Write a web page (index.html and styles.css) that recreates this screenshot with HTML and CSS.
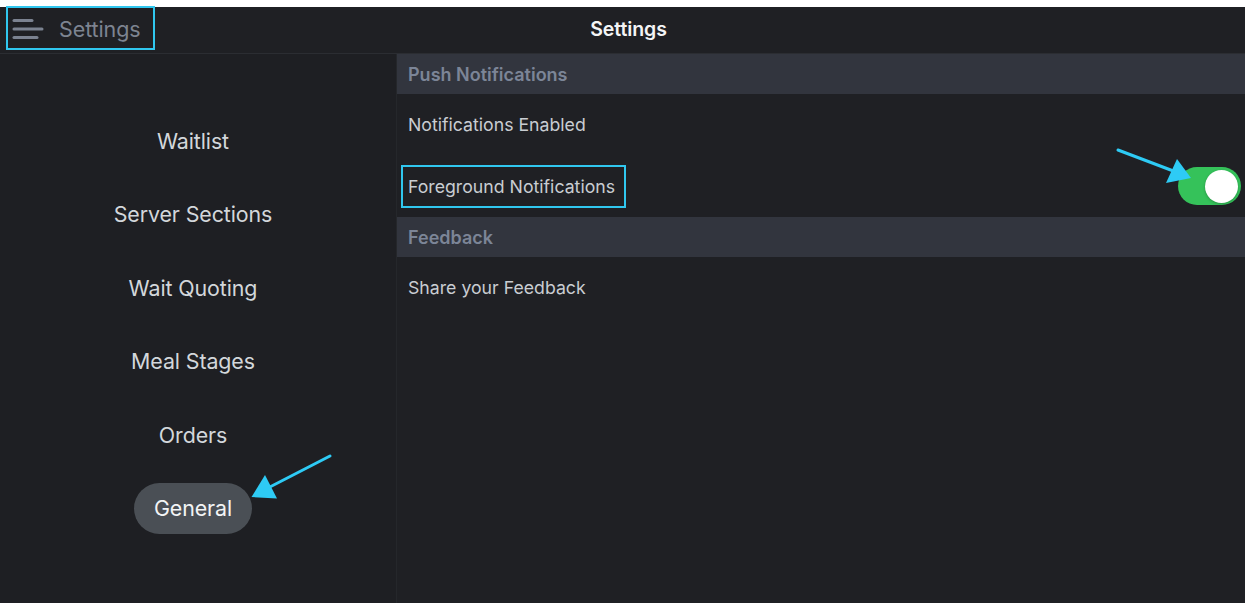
FILE: index.html
```html
<!DOCTYPE html>
<html>
<head>
<meta charset="utf-8">
<link rel="stylesheet" href="styles.css">
</head>
<body>
<div class="app">
  <header class="topbar">
    <div class="topbar-left">
      <button class="menu-btn">
        <svg class="hamburger" width="32" height="24" viewBox="0 0 32 24">
          <line x1="2" y1="3.5" x2="20" y2="3.5"/>
          <line x1="2" y1="12" x2="30" y2="12"/>
          <line x1="2" y1="20.5" x2="25" y2="20.5"/>
        </svg>
        <span class="menu-label">Settings</span>
      </button>
    </div>
    <div class="title">Settings</div>
    <div class="topbar-right"></div>
  </header>
  <div class="body">
    <nav class="sidebar">
      <div class="nav-item">Waitlist</div>
      <div class="nav-item">Server Sections</div>
      <div class="nav-item">Wait Quoting</div>
      <div class="nav-item">Meal Stages</div>
      <div class="nav-item">Orders</div>
      <div class="nav-item active">General</div>
    </nav>
    <main class="content">
      <div class="section-header">Push Notifications</div>
      <div class="row">Notifications Enabled</div>
      <div class="row">
        <span class="highlight">Foreground Notifications</span>
        <span class="toggle"><span class="knob"></span></span>
      </div>
      <div class="section-header">Feedback</div>
      <div class="row">Share your Feedback</div>
    </main>
  </div>
</div>
<svg class="annotations" width="1246" height="603" viewBox="0 0 1246 603">
  <line x1="330" y1="456" x2="264" y2="490"/>
  <polygon points="251.5,497 265,475 277,498.5"/>
  <line x1="1118" y1="150" x2="1176" y2="172"/>
  <polygon points="1191,178 1177,159 1166,183"/>
</svg>
</body>
</html>
```
FILE: styles.css
```css
* { box-sizing: border-box; }
html, body { margin: 0; padding: 0; }
body {
  background: #ffffff;
  width: 1246px;
  height: 603px;
  overflow: hidden;
  position: relative;
  font-family: Inter, "Noto Sans", "Liberation Sans", sans-serif;
}
.app {
  margin-top: 7px;
  width: 1245px;
  height: 596px;
  background: #1f2024;
  display: flex;
  flex-direction: column;
}
.topbar {
  height: 47px;
  flex: none;
  display: grid;
  grid-template-columns: 1fr auto 1fr;
  align-items: center;
  padding-left: 12px;
  border-bottom: 1px solid #2b2d32;
  background: #1f2024;
}
.topbar-left { display: flex; align-items: flex-start; height: 100%; margin-left: -12px; }
.menu-btn {
  display: flex;
  align-items: center;
  gap: 15px;
  background: transparent;
  border: 2px solid #30c7ef;
  height: 44px;
  width: 149px;
  margin-left: 6px;
  margin-top: -1px;
  padding: 1px 0 0 4px;
  cursor: pointer;
  font-family: inherit;
}
.hamburger line {
  stroke: #7b8290;
  stroke-width: 3;
  stroke-linecap: round;
}
.menu-label {
  color: #7d8491;
  font-size: 21.5px;
  letter-spacing: -0.1px;
}
.title {
  color: #f4f5f6;
  font-size: 19.5px;
  font-weight: 600;
  letter-spacing: -0.1px;
  margin-top: -2px;
}
.body {
  flex: 1;
  display: flex;
  min-height: 0;
}
.sidebar {
  width: 397px;
  flex: none;
  background: #1e1f23;
  border-right: 1px solid #25272b;
  display: flex;
  flex-direction: column;
  align-items: center;
  padding-top: 61px;
  gap: 22.6px;
  padding-right: 10px;
}
.nav-item {
  height: 51px;
  display: flex;
  align-items: center;
  padding: 0 20px;
  border-radius: 26px;
  color: #d3d7db;
  font-size: 21.4px;
  letter-spacing: -0.1px;
}
.nav-item.active {
  background: #4a4f55;
  color: #f3f4f5;
}
.content {
  flex: 1;
  display: flex;
  flex-direction: column;
}
.section-header {
  height: 40px;
  flex: none;
  background: #32353e;
  color: #7c8597;
  font-size: 18px;
  font-weight: 600;
  display: flex;
  align-items: center;
  padding-left: 11px;
}
.row {
  height: 61.5px;
  flex: none;
  display: flex;
  align-items: center;
  justify-content: space-between;
  padding-left: 11px;
  padding-right: 4px;
  color: #c9cdd2;
  font-size: 17.7px;
}
.highlight {
  border: 2px solid #30c7ef;
  margin-left: -7px;
  padding: 9px 9px 9px 5px;
}
.toggle {
  width: 63px;
  height: 38px;
  border-radius: 19px;
  background: #35c25a;
  display: flex;
  align-items: center;
  justify-content: flex-end;
  padding-right: 3px;
}
.knob {
  width: 33px;
  height: 33px;
  border-radius: 50%;
  background: #ffffff;
  box-shadow: 0 1px 3px rgba(0,0,0,0.25);
}
.annotations {
  position: absolute;
  top: 0;
  left: 0;
  pointer-events: none;
}
.annotations line {
  stroke: #2ecbf5;
  stroke-width: 3;
  stroke-linecap: round;
}
.annotations polygon {
  fill: #2ecbf5;
}
```
